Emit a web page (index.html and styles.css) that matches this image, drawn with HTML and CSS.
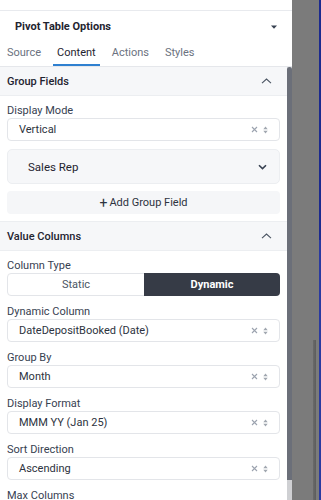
FILE: index.html
```html
<!DOCTYPE html>
<html>
    <head>
        <title>Pivot Table Options</title>
        <meta charset="utf-8"/>
        <link rel="stylesheet" href="styles.css">
    </head>
    <body>
        <div class="screen">
            <div class="panel">
                <div class="top-strip"></div>
                <div class="title-row">
                    <span class="title">Pivot Table Options</span>
                    <svg class="caret" width="6" height="4" viewBox="0 0 6 4"><path d="M0 0.5h6L3 3.8z" fill="#374151"/></svg>
                </div>
                <div class="tabs">
                    <span class="tab">Source</span>
                    <span class="tab active">Content</span>
                    <span class="tab">Actions</span>
                    <span class="tab">Styles</span>
                </div>
                <div class="scroll">
                    <div class="content">
                        <div class="section">
                            <div class="section-head">
                                <span>Group Fields</span>
                                <svg class="chev-up" width="11" height="6" viewBox="0 0 11 6"><path d="M1 5.2L5.5 1 10 5.2" fill="none" stroke="#4b5563" stroke-width="1.1"/></svg>
                            </div>
                            <div class="section-body">
                                <div class="field">
                                    <div class="label">Display Mode</div>
                                    <div class="select">
                                        <span class="value">Vertical</span>
                                        <span class="icons">
                                            <svg width="7" height="7" viewBox="0 0 7 7"><path d="M1 1l5 5M6 1L1 6" stroke="#9ca3af" stroke-width="1.1"/></svg>
                                            <svg width="5" height="8" viewBox="0 0 5 8"><path d="M0.3 3.3L2.5 0.6 4.7 3.3zM0.3 4.7L2.5 7.4 4.7 4.7z" fill="#a1a7b0"/></svg>
                                        </span>
                                    </div>
                                </div>
                                <div class="field-card">
                                    <span>Sales Rep</span>
                                    <svg width="9" height="6" viewBox="0 0 9 6"><path d="M1 1.2L4.5 4.6 8 1.2" fill="none" stroke="#374151" stroke-width="1.6"/></svg>
                                </div>
                                <div class="add-btn"><span class="plus">+</span>Add Group Field</div>
                            </div>
                        </div>
                        <div class="section">
                            <div class="section-head">
                                <span>Value Columns</span>
                                <svg class="chev-up" width="11" height="6" viewBox="0 0 11 6"><path d="M1 5.2L5.5 1 10 5.2" fill="none" stroke="#4b5563" stroke-width="1.1"/></svg>
                            </div>
                            <div class="section-body">
                                <div class="field">
                                    <div class="label">Column Type</div>
                                    <div class="segmented">
                                        <span class="seg">Static</span>
                                        <span class="seg on">Dynamic</span>
                                    </div>
                                </div>
                                <div class="field">
                                    <div class="label">Dynamic Column</div>
                                    <div class="select">
                                        <span class="value">DateDepositBooked (Date)</span>
                                        <span class="icons">
                                            <svg width="7" height="7" viewBox="0 0 7 7"><path d="M1 1l5 5M6 1L1 6" stroke="#9ca3af" stroke-width="1.1"/></svg>
                                            <svg width="5" height="8" viewBox="0 0 5 8"><path d="M0.3 3.3L2.5 0.6 4.7 3.3zM0.3 4.7L2.5 7.4 4.7 4.7z" fill="#a1a7b0"/></svg>
                                        </span>
                                    </div>
                                </div>
                                <div class="field">
                                    <div class="label">Group By</div>
                                    <div class="select">
                                        <span class="value">Month</span>
                                        <span class="icons">
                                            <svg width="7" height="7" viewBox="0 0 7 7"><path d="M1 1l5 5M6 1L1 6" stroke="#9ca3af" stroke-width="1.1"/></svg>
                                            <svg width="5" height="8" viewBox="0 0 5 8"><path d="M0.3 3.3L2.5 0.6 4.7 3.3zM0.3 4.7L2.5 7.4 4.7 4.7z" fill="#a1a7b0"/></svg>
                                        </span>
                                    </div>
                                </div>
                                <div class="field">
                                    <div class="label">Display Format</div>
                                    <div class="select">
                                        <span class="value">MMM YY (Jan 25)</span>
                                        <span class="icons">
                                            <svg width="7" height="7" viewBox="0 0 7 7"><path d="M1 1l5 5M6 1L1 6" stroke="#9ca3af" stroke-width="1.1"/></svg>
                                            <svg width="5" height="8" viewBox="0 0 5 8"><path d="M0.3 3.3L2.5 0.6 4.7 3.3zM0.3 4.7L2.5 7.4 4.7 4.7z" fill="#a1a7b0"/></svg>
                                        </span>
                                    </div>
                                </div>
                                <div class="field">
                                    <div class="label">Sort Direction</div>
                                    <div class="select">
                                        <span class="value">Ascending</span>
                                        <span class="icons">
                                            <svg width="7" height="7" viewBox="0 0 7 7"><path d="M1 1l5 5M6 1L1 6" stroke="#9ca3af" stroke-width="1.1"/></svg>
                                            <svg width="5" height="8" viewBox="0 0 5 8"><path d="M0.3 3.3L2.5 0.6 4.7 3.3zM0.3 4.7L2.5 7.4 4.7 4.7z" fill="#a1a7b0"/></svg>
                                        </span>
                                    </div>
                                </div>
                                <div class="field">
                                    <div class="label">Max Columns</div>
                                </div>
                            </div>
                        </div>
                    </div>
                    <div class="scrollbar"><div class="thumb"></div></div>
                </div>
            </div>
            <div class="backdrop">
                <div class="shade"></div>
                <div class="edge"></div>
            </div>
        </div>
    </body>
</html>
```

FILE: styles.css
```css
* { box-sizing: border-box }

body {
    margin: 0;
    font-family: Roboto, "Liberation Sans", sans-serif;
    font-size: 11px;
    color: #374151;
}

.screen {
    display: flex;
    height: 500px;
    overflow: hidden;
}

.panel {
    width: 292px;
    background: #fff;
    display: flex;
    flex-direction: column;
}

.top-strip {
    height: 11px;
    border-bottom: 1px solid #e8eaee;
}

.title-row {
    height: 31px;
    padding: 0 15px;
    display: flex;
    align-items: center;
    justify-content: space-between;
}

.title {
    font-weight: 700;
    color: #1f2430;
}

.tabs {
    height: 25px;
    padding: 0 3px;
    display: flex;
    gap: 8px;
    border-bottom: 1px solid #e5e7eb;
}

.tab {
    padding: 0 4px;
    line-height: 22px;
    color: #6b7280;
    border-bottom: 2px solid transparent;
}

.tab.active {
    color: #1f2430;
    border-bottom-color: #2f80d0;
}

.scroll {
    flex: 1;
    min-height: 0;
    display: flex;
    overflow: hidden;
}

.content { flex: 1 }

.section-head {
    height: 29px;
    padding: 0 15px 0 7px;
    display: flex;
    align-items: center;
    justify-content: space-between;
    background: #f6f7f9;
    border-bottom: 1px solid #eceef1;
    color: #1f2430;
    font-weight: 500;
}

.section-body {
    padding: 7px 7px 7px;
    border-bottom: 1px solid #eceef1;
}

.field { margin-bottom: 8px }

.label {
    line-height: 15px;
    color: #374151;
}

.select {
    height: 23px;
    padding: 0 11px 0 11px;
    border: 1px solid #e3e5e9;
    border-radius: 4px;
    display: flex;
    align-items: center;
    justify-content: space-between;
    color: #2d3340;
}

.icons {
    display: flex;
    align-items: center;
    gap: 5px;
}

.field-card {
    height: 35px;
    padding: 0 12px 0 20px;
    margin-bottom: 7px;
    border: 1px solid #eceef1;
    border-radius: 5px;
    background: #f6f7f9;
    display: flex;
    align-items: center;
    justify-content: space-between;
    color: #1f2430;
    font-size: 11.5px;
}

.add-btn {
    height: 23px;
    border-radius: 4px;
    background: #f5f6f8;
    display: flex;
    align-items: center;
    justify-content: center;
    color: #2d3340;
}

.plus {
    font-size: 14px;
    margin-right: 2px;
    line-height: 1;
}

.segmented {
    height: 23px;
    display: flex;
    border: 1px solid #e3e5e9;
    border-radius: 4px;
}

.seg {
    flex: 1;
    display: flex;
    align-items: center;
    justify-content: center;
    color: #4b5563;
}

.seg.on {
    margin: -1px -1px -1px 0;
    background: #363b46;
    border-radius: 0 4px 4px 0;
    color: #fff;
    font-weight: 700;
}

.scrollbar {
    width: 5px;
    background: #cfd0d3;
}

.thumb {
    height: 413px;
    background: #6b6f79;
    border-radius: 3px 3px 0 0;
}

.backdrop {
    flex: 1;
    display: flex;
    background: #7b7b7b;
}

.shade {
    flex: 1;
    background: linear-gradient(to right, #7b7b7b 0, #7b7b7b 21px, #6a6a6a 21px, #5c5c5c 24px, #7b7b7b 24px);
    background-size: 100% 160px;
    background-position: 0 340px;
    background-repeat: no-repeat;
}

.edge {
    width: 2px;
    background: linear-gradient(#1c2a8e 0, #1c2a8e 240px, #2a3aa0 240px);
}
```
